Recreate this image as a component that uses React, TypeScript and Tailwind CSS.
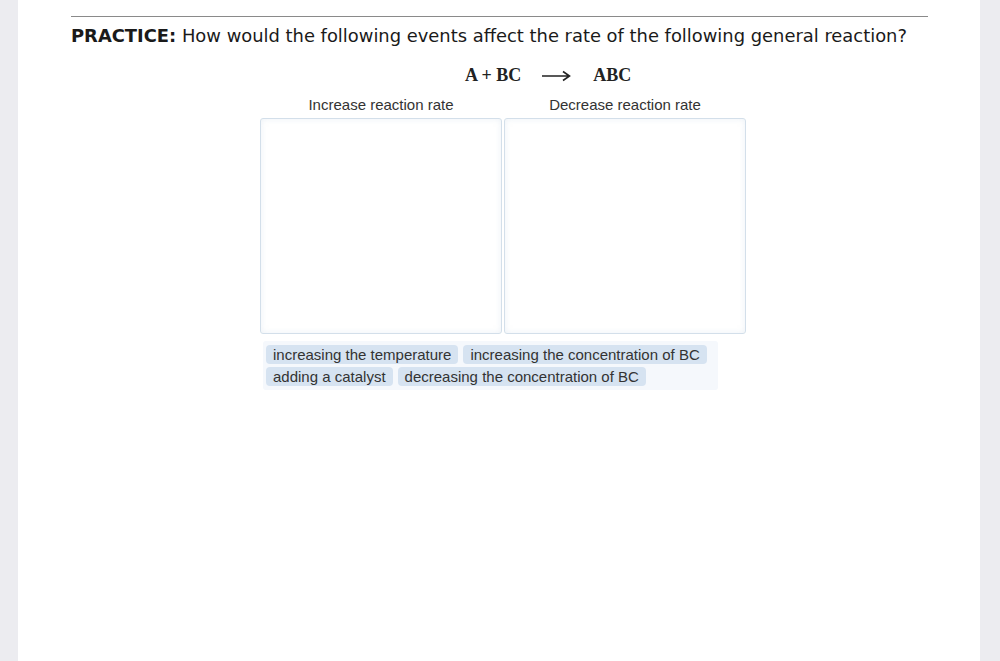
export default function App() {
  const chipsRow1 = ["increasing the temperature", "increasing the concentration of BC"]
  const chipsRow2 = ["adding a catalyst", "decreasing the concentration of BC"]

  return (
    <div className="flex h-[661px] w-[1000px] bg-[#ececf0]">
      <div className="ml-[18px] h-full w-[962px] bg-white pl-[53px] pt-4">
        <div className="w-[857px] border-t border-[#8a8a8a]" />
        <h1 className="mt-[8px] text-[17.9px] leading-[22px] text-[#1a1a1a] [font-family:'DejaVu_Sans',sans-serif]">
          <span className="font-bold">PRACTICE:</span> How would the following events affect the rate of the following general reaction?
        </h1>

        {/* equation */}
        <div className="mt-[15px] flex items-center pl-[394px] text-[18px] font-bold text-[#222] [font-family:'Liberation_Serif',serif]">
          <span>A + BC</span>
          <svg className="ml-[20px]" width="30" height="12" viewBox="0 0 30 12">
            <path d="M1 6 H28 M22 1.5 L28.5 6 L22 10.5" fill="none" stroke="#222" strokeWidth="1.6" />
          </svg>
          <span className="ml-[22px]">ABC</span>
        </div>

        <div className="mt-[7px] ml-[189px] flex gap-[2px] [font-family:'Liberation_Sans',Arial,sans-serif]">
          {["Increase reaction rate", "Decrease reaction rate"].map((label) => (
            <div key={label} className="flex w-[242px] flex-col items-center">
              <div className="text-[15px] leading-[18px] text-[#333]">{label}</div>
              <div className="mt-[4px] h-[216px] w-full rounded-[3px] border border-[#d3dfea] shadow-[inset_0_0_6px_rgba(200,215,230,0.35)]" />
            </div>
          ))}
        </div>

        <div className="mt-[7px] ml-[192px] flex w-[455px] flex-col gap-[3px] rounded-[3px] bg-[#f5f8fc] px-[3px] py-[4px] text-[15px] leading-[19px] text-[#333] [font-family:'Liberation_Sans',Arial,sans-serif]">
          {[chipsRow1, chipsRow2].map((row, i) => (
            <div key={i} className="flex gap-[5px]">
              {row.map((chip) => (
                <span key={chip} className="rounded-[4px] bg-[#d6e3f1] px-[7px]">
                  {chip}
                </span>
              ))}
            </div>
          ))}
        </div>
      </div>
    </div>
  )
}
